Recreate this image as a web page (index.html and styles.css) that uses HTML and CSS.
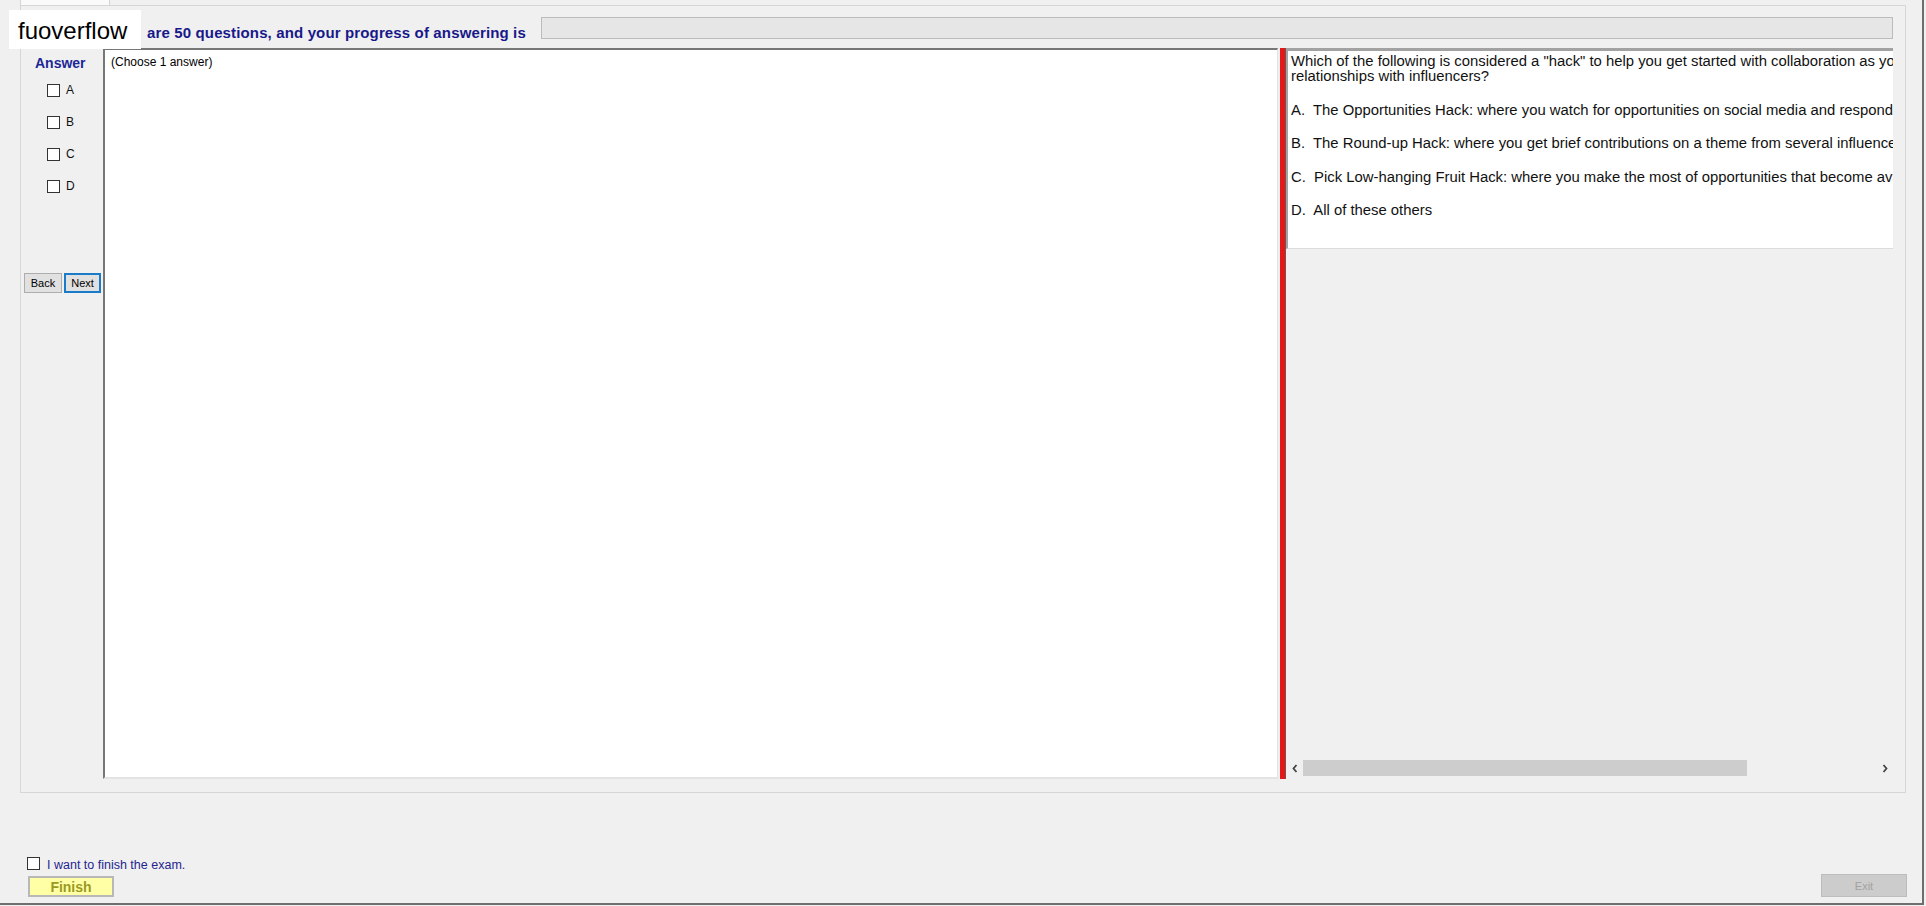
FILE: index.html
```html
<!DOCTYPE html>
<html lang="en">
<head>
<meta charset="utf-8">
<title>Exam</title>
<link rel="stylesheet" href="styles.css">
</head>
<body>
<div class="window">
  <div class="tabctl">
    <div class="tabhead"></div>
    <div class="tabpage">
      <div class="header">
        <span class="progress-label">are 50 questions, and your progress of answering is</span>
        <div class="progress"></div>
      </div>
      <div class="main">
        <div class="answers">
          <div class="answers-title">Answer</div>
          <label class="opt"><span class="box"></span><span class="opt-label">A</span></label>
          <label class="opt"><span class="box"></span><span class="opt-label">B</span></label>
          <label class="opt"><span class="box"></span><span class="opt-label">C</span></label>
          <label class="opt"><span class="box"></span><span class="opt-label">D</span></label>
          <div class="nav">
            <button class="btn btn-back">Back</button>
            <button class="btn btn-next">Next</button>
          </div>
        </div>
        <div class="notes">(Choose 1 answer)</div>
        <div class="splitter"></div>
        <div class="qpanel">
          <div class="qview">
            <p class="question">Which of the following is considered a "hack" to help you get started with collaboration as you build<br>relationships with influencers?</p>
            <p class="choice">A.&nbsp; The Opportunities Hack: where you watch for opportunities on social media and respond to them quickly</p>
            <p class="choice">B.&nbsp; The Round-up Hack: where you get brief contributions on a theme from several influencers and publish them together</p>
            <p class="choice">C.&nbsp; Pick Low-hanging Fruit Hack: where you make the most of opportunities that become available easily</p>
            <p class="choice">D.&nbsp; All of these others</p>
          </div>
          <div class="hscroll">
            <div class="arrow">
              <svg width="8" height="9" viewBox="0 0 8 9"><polyline points="5.5,1 2.5,4.5 5.5,8" fill="none" stroke="#444" stroke-width="1.8"/></svg>
            </div>
            <div class="track"><div class="thumb"></div></div>
            <div class="arrow">
              <svg width="8" height="9" viewBox="0 0 8 9"><polyline points="2.5,1 5.5,4.5 2.5,8" fill="none" stroke="#444" stroke-width="1.8"/></svg>
            </div>
          </div>
        </div>
      </div>
    </div>
  </div>
  <div class="footer">
    <div class="finish-group">
      <label class="finish-check"><span class="box"></span><span class="finish-text">I want to finish the exam.</span></label>
      <button class="btn-finish">Finish</button>
    </div>
    <button class="btn-exit">Exit</button>
  </div>
  <div class="watermark">fuoverflow</div>
</div>
</body>
</html>
```

FILE: styles.css
```css
html, body {
  margin: 0;
  padding: 0;
}
body {
  background: #f0f0f0;
  font-family: "Liberation Sans", Arial, sans-serif;
  color: #000;
  width: 1926px;
  height: 906px;
  overflow: hidden;
}
.window {
  position: relative;
  width: 1924px;
  height: 905px;
  box-sizing: border-box;
  border-right: 2px solid #6e6e6e;
  border-bottom: 2px solid #6e6e6e;
  background: #f0f0f0;
}
.tabctl {
  margin-left: 20px;
  width: 1886px;
}
.tabhead {
  width: 90px;
  height: 5px;
  box-sizing: border-box;
  border-left: 1px solid #d4d4d4;
  border-right: 1px solid #d4d4d4;
  background: #fafafa;
}
.tabpage {
  height: 788px;
  box-sizing: border-box;
  border: 1px solid #d6d6d6;
  background: #f0f0f0;
  display: flex;
  flex-direction: column;
}
.header {
  height: 42px;
  display: flex;
  align-items: flex-start;
  padding-left: 126px;
}
.progress-label {
  margin-top: 19px;
  font-size: 15px;
  line-height: 15px;
  font-weight: bold;
  letter-spacing: 0.14px;
  color: #18188a;
  white-space: nowrap;
}
.progress {
  margin-left: auto;
  margin-right: 12px;
  margin-top: 11px;
  width: 1352px;
  height: 22px;
  box-sizing: border-box;
  border: 1px solid #bcbcbc;
  background: #e6e6e6;
}
.main {
  height: 731px;
  display: flex;
}
.answers {
  width: 82px;
  display: flex;
  flex-direction: column;
}
.answers-title {
  margin-top: 7px;
  padding-left: 14px;
  font-size: 14px;
  line-height: 16px;
  font-weight: bold;
  color: #1c2796;
}
.opt {
  display: flex;
  align-items: center;
  height: 13px;
  margin-top: 19px;
  padding-left: 26px;
  font-size: 12px;
}
.answers-title + .opt {
  margin-top: 13px;
}
.box {
  display: block;
  flex: none;
  width: 13px;
  height: 13px;
  box-sizing: border-box;
  border: 1px solid #333;
  background: #fff;
}
.opt-label {
  margin-left: 6px;
  line-height: 13px;
  color: #111;
}
.nav {
  display: flex;
  gap: 2px;
  margin-top: 80px;
  padding-left: 3px;
}
.btn {
  height: 20px;
  padding: 0;
  box-sizing: border-box;
  font-family: "Liberation Sans", Arial, sans-serif;
  font-size: 11px;
  color: #000;
  background: #e1e1e1;
  border: 1px solid #adadad;
}
.btn-back {
  width: 38px;
}
.btn-next {
  width: 37px;
  border: 2px solid #1a7bc8;
}
.notes {
  width: 1175px;
  box-sizing: border-box;
  background: #fff;
  border-top: 2px solid #777;
  border-left: 2px solid #777;
  border-right: 1px solid #e3e3e3;
  border-bottom: 2px solid #e3e3e3;
  padding: 5px 6px;
  font-size: 12px;
  line-height: 14px;
}
.splitter {
  margin-left: 2px;
  width: 6px;
  box-sizing: border-box;
  background: #e41818;
  border-right: 1px solid #7a5050;
}
.qpanel {
  width: 607px;
  display: flex;
  flex-direction: column;
  padding-bottom: 3px;
  box-sizing: border-box;
}
.qview {
  height: 201px;
  box-sizing: border-box;
  background: #fff;
  border-top: 3px solid #a2a2a2;
  border-left: 2px solid #a2a2a2;
  border-bottom: 1px solid #dcdcdc;
  padding: 3px 0 0 3px;
  overflow: hidden;
  white-space: nowrap;
  font-size: 14.85px;
  line-height: 15px;
  color: #111;
}
.qview p {
  margin: 0;
}
.question {
  margin-bottom: 18.5px !important;
}
.choice {
  margin-bottom: 18.5px !important;
}
.hscroll {
  margin-top: auto;
  height: 16px;
  display: flex;
  background: #f0f0f0;
}
.arrow {
  width: 17px;
  display: flex;
  align-items: center;
  justify-content: center;
}
.track {
  flex: 1;
  display: flex;
}
.thumb {
  width: 444px;
  background: #cdcdcd;
}
.footer {
  height: 110px;
  box-sizing: border-box;
  display: flex;
  justify-content: space-between;
  align-items: flex-end;
  padding: 0 15px 6px 27px;
}
.finish-group {
  display: flex;
  flex-direction: column;
}
.finish-check {
  display: flex;
  align-items: flex-end;
  height: 13px;
}
.finish-text {
  margin-left: 7px;
  font-size: 12.5px;
  line-height: 13px;
  position: relative;
  top: 2px;
  color: #25258f;
}
.btn-finish {
  margin-top: 6px;
  margin-left: 1px;
  width: 86px;
  height: 21px;
  padding: 0;
  box-sizing: border-box;
  background: #ffffa6;
  border: 2px solid #b8b8b8;
  font-family: "Liberation Sans", Arial, sans-serif;
  font-size: 14px;
  font-weight: bold;
  color: #9a9a22;
}
.btn-exit {
  width: 86px;
  height: 23px;
  padding: 0;
  box-sizing: border-box;
  background: #cccccc;
  border: 1px solid #bdbdbd;
  font-family: "Liberation Sans", Arial, sans-serif;
  font-size: 11px;
  color: #a2a2a2;
}
.watermark {
  position: absolute;
  left: 9px;
  top: 10px;
  width: 132px;
  height: 39px;
  box-sizing: border-box;
  padding-left: 9px;
  background: #fff;
  font-size: 24px;
  line-height: 42px;
  color: #000;
  overflow: hidden;
}
```
